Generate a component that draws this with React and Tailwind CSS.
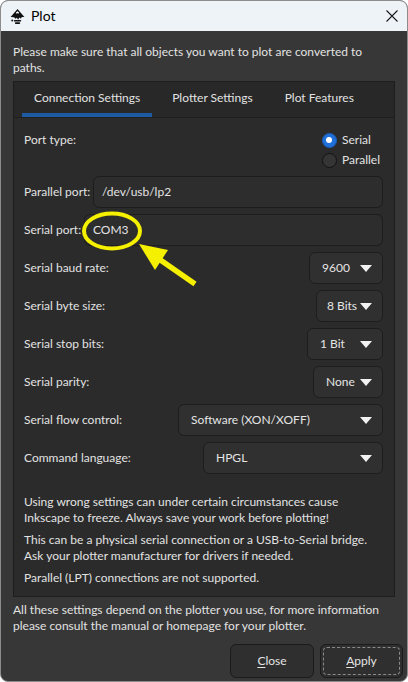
import React from "react";

const font = { fontFamily: 'Lato, "Noto Sans", sans-serif' };

const Arrow = () => (
  <svg width="12" height="7" viewBox="0 0 12 7" className="shrink-0">
    <path d="M0 0 H12 L6 7 Z" fill="#f2f2f2" />
  </svg>
);

const Dropdown = ({ value, width, pad = "pl-[12px]" }) => (
  <div
    className={`${width} ${pad} h-[32px] flex items-center justify-between pr-[10px] rounded-[6px] border border-[#1d1d1d] bg-[#303030] text-[#e4e4e4]`}
  >
    <span className="whitespace-nowrap">{value}</span>
    <Arrow />
  </div>
);

const Row = ({ label, children }) => (
  <div className="flex items-center justify-between h-[32px]">
    <span>{label}</span>
    {children}
  </div>
);

const Entry = ({ label, value, width }) => (
  <div className="flex items-center justify-between h-[32px]">
    <span>{label}</span>
    <div className={`${width} h-[32px] flex items-center pl-[8px] rounded-[6px] border border-[#1d1d1d] bg-[#2d2d2d]`}>
      {value}
    </div>
  </div>
);

const InkscapeLogo = () => (
  <svg width="17" height="17" viewBox="0 0 16 16">
    <path d="M8 1 L14.5 8.5 L12 8.5 L11.2 10 L9.8 9 L8.6 11 L7.4 9.2 L6 10.2 L4.8 8.6 L1.5 8.5 Z" fill="#111" />
    <path d="M6.4 4.4 L8 3.1 L9.6 4.4 L8.6 5.3 L8 4.8 L7.4 5.3 Z" fill="#fff" />
    <rect x="4.5" y="11.2" width="7" height="1.6" rx="0.8" fill="#111" />
    <rect x="5.5" y="13.4" width="5" height="1.6" rx="0.8" fill="#111" />
    <circle cx="3" cy="11.8" r="0.9" fill="#111" />
  </svg>
);

const Radio = ({ checked, label }) => (
  <div className="flex items-center h-[20px] gap-[5px]">
    {checked ? (
      <span className="shrink-0 w-[15px] h-[15px] rounded-full bg-[#2170d8] border border-[#1a5fba] flex items-center justify-center">
        <span className="w-[6px] h-[6px] rounded-full bg-white" />
      </span>
    ) : (
      <span className="shrink-0 w-[15px] h-[15px] rounded-full bg-[#353535] border border-[#121212]" />
    )}
    <span className="whitespace-nowrap">{label}</span>
  </div>
);

export default function App() {
  return (
    <div className="w-[408px] h-[682px] bg-white" style={font}>
      <div className="relative w-[408px] h-[682px] rounded-[8px] overflow-hidden border border-[#8c8c8c] bg-[#373737] flex flex-col text-[12px] leading-[16px] text-[#e2e2e2]">
        {/* title bar */}
        <div className="h-[30px] bg-[#eef3f8] flex items-center pl-[8px] pr-[9px] shrink-0">
          <InkscapeLogo />
          <span className="ml-[5px] text-[14px] text-black">Plot</span>
          <div className="flex-1" />
          <svg width="12" height="12" viewBox="0 0 12 12">
            <path d="M0.5 0.5 L11.5 11.5 M11.5 0.5 L0.5 11.5" stroke="#1a1a1a" strokeWidth="1.1" />
          </svg>
        </div>

        <div className="flex-1 flex flex-col px-[12px]">
          <div className="pt-[13px] pb-[3px]">
            <div className="whitespace-nowrap">Please make sure that all objects you want to plot are converted to</div>
            <div>paths.</div>
          </div>

          {/* notebook */}
          <div className="mt-[2px] h-[516px] border border-[#1e1e1e] bg-[#2b2b2b] flex flex-col">
            <div className="h-[36px] flex items-end pl-[8px] gap-[8px] border-b border-[#1f1f1f] bg-[#282828]">
              <div className="h-full flex flex-col justify-between">
                <div className="flex-1 flex items-center px-[12px]">Connection Settings</div>
                <div className="h-[4px] bg-[#1d5aa2]" />
              </div>
              <div className="h-full flex items-center px-[12px] pb-[4px]">Plotter Settings</div>
              <div className="h-full flex items-center px-[12px] pb-[4px]">Plot Features</div>
            </div>

            <div className="flex flex-col pl-[10px] pr-[11px] pt-[12px]">
              <div className="flex justify-between h-[40px]">
                <span className="pt-[2px]">Port type:</span>
                <div className="flex flex-col pr-[3px]">
                  <Radio checked label="Serial" />
                  <Radio label="Parallel" />
                </div>
              </div>

              <div className="flex flex-col gap-[6px] mt-[6px]">
                <Entry label="Parallel port:" value="/dev/usb/lp2" width="w-[290px]" />
                <Entry label="Serial port:" value="COM3" width="w-[299px]" />
                <Row label="Serial baud rate:">
                  <Dropdown value="9600" width="w-[74px]" />
                </Row>
                <Row label="Serial byte size:">
                  <Dropdown value="8 Bits" width="w-[67px]" pad="pl-[10px]" />
                </Row>
                <Row label="Serial stop bits:">
                  <Dropdown value="1 Bit" width="w-[76px]" />
                </Row>
                <Row label="Serial parity:">
                  <Dropdown value="None" width="w-[70px]" />
                </Row>
                <Row label="Serial flow control:">
                  <Dropdown value="Software (XON/XOFF)" width="w-[205px]" />
                </Row>
                <Row label="Command language:">
                  <Dropdown value="HPGL" width="w-[180px]" />
                </Row>
              </div>

              <div className="mt-[20px] flex flex-col gap-[6px]">
                <div>
                  <div className="whitespace-nowrap">Using wrong settings can under certain circumstances cause</div>
                  <div className="whitespace-nowrap">Inkscape to freeze. Always save your work before plotting!</div>
                </div>
                <div>
                  <div className="whitespace-nowrap">This can be a physical serial connection or a USB-to-Serial bridge.</div>
                  <div className="whitespace-nowrap">Ask your plotter manufacturer for drivers if needed.</div>
                </div>
                <div className="whitespace-nowrap">Parallel (LPT) connections are not supported.</div>
              </div>
            </div>
          </div>

          <div className="pt-[5px]">
            <div className="whitespace-nowrap">All these settings depend on the plotter you use, for more information</div>
            <div className="whitespace-nowrap">please consult the manual or homepage for your plotter.</div>
          </div>

          <div className="mt-[10px] flex justify-end gap-[6px] -mr-[8px]">
            <button className="w-[84px] h-[34px] rounded-[6px] border border-[#1b1b1b] bg-[#2f2f2f] text-[#e4e4e4]">
              <span className="underline underline-offset-2">C</span>lose
            </button>
            <button className="w-[83px] h-[34px] rounded-[6px] border border-[#1b1b1b] bg-[#2f2f2f] text-[#e4e4e4] p-[2px]">
              <span className="flex items-center justify-center w-full h-full rounded-[4px] border border-dashed border-[#8a8a8a]">
                <span className="underline underline-offset-2">A</span>pply
              </span>
            </button>
          </div>
        </div>

        {/* annotation overlay */}
        <svg className="absolute left-0 top-0 pointer-events-none" width="408" height="682">
          <ellipse cx="111" cy="230" rx="28" ry="17.5" fill="none" stroke="#f5ef00" strokeWidth="4" />
          <path d="M138 243 L167 249 L154 269 Z" fill="#f5ef00" />
          <path d="M158 258 L194 283" stroke="#f5ef00" strokeWidth="5.5" />
        </svg>
      </div>
    </div>
  );
}
